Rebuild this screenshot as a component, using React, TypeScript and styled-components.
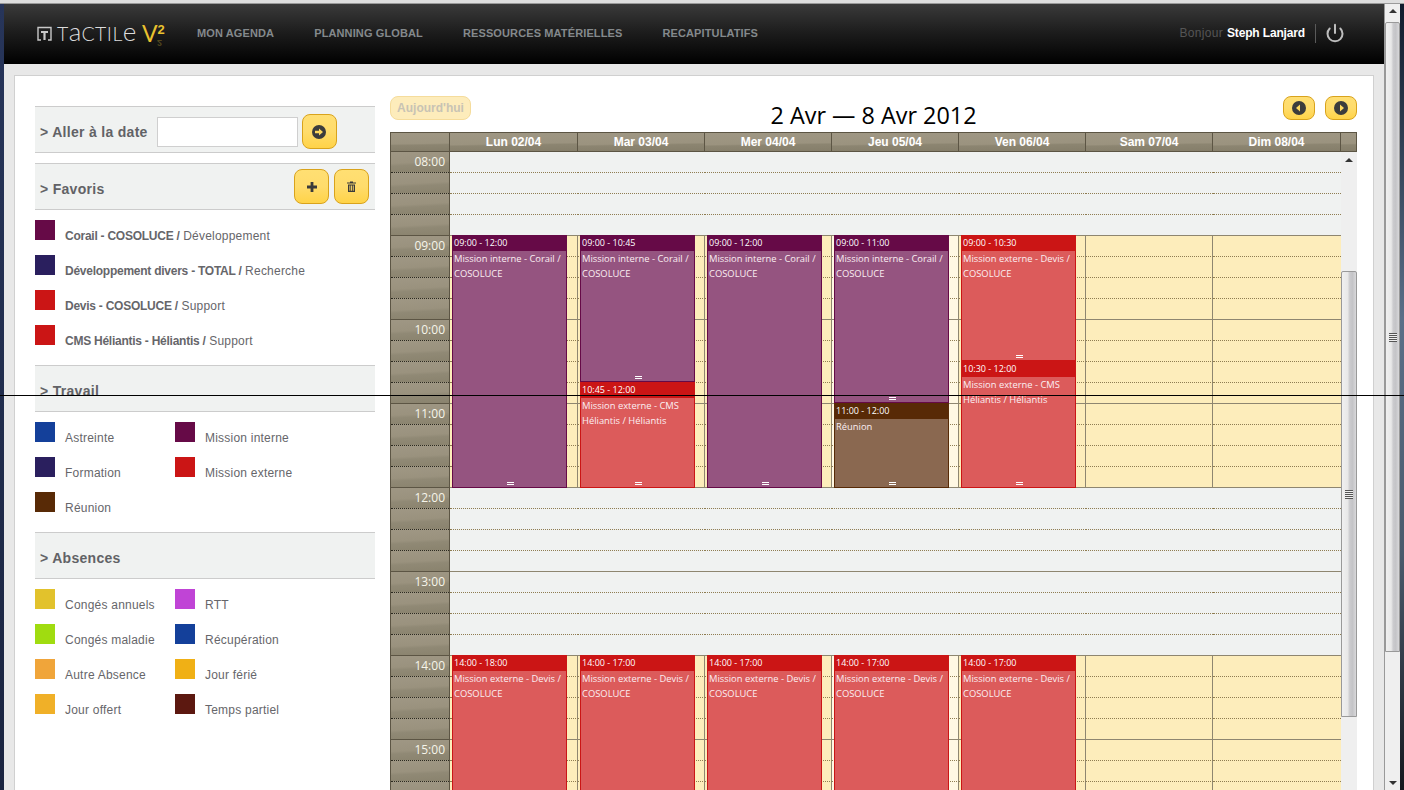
import React from "react";
import styled, { createGlobalStyle, css } from "styled-components";
import { Power } from "lucide-react";

const Global = createGlobalStyle`
  html, body { margin: 0; padding: 0; height: 790px; overflow: hidden; background: #222; }
  #root { height: 790px; }
  * { box-sizing: border-box; }
`;

const ui = `"Liberation Sans", Arial, sans-serif`;
const humanist = `"Open Sans", "Noto Sans", sans-serif`;

const Frame = styled.div`
  position: relative;
  display: flex;
  flex-direction: column;
  width: 1404px;
  height: 790px;
  overflow: hidden;
  font-family: ${ui};
`;
const TopEdge = styled.div`
  flex: 0 0 4px;
  background: #dedede;
  border-bottom: 1px solid #9a9a9a;
`;
const Row = styled.div`
  flex: 1;
  display: flex;
  min-height: 0;
`;
const LeftEdge = styled.div`
  flex: 0 0 4px;
  background: linear-gradient(180deg, #27355a, #1a2440);
`;
const RightEdge = styled.div`
  flex: 1;
  background: linear-gradient(180deg, #101a2c 0, #5a6f88 40%, #4a5a6c 70%, #15181e 100%);
`;
const Main = styled.div`
  flex: 0 0 1380px;
  display: flex;
  flex-direction: column;
  min-height: 0;
  background: #e8e8e8;
`;
const Header = styled.header`
  flex: 0 0 60px;
  display: flex;
  align-items: center;
  padding: 0 40px 2px 33px;
  background: linear-gradient(180deg, #3a3a3a 0, #1e1e1e 45%, #000 100%);
`;
const Logo = styled.div`
  flex: 0 0 160px;
  display: flex;
  align-items: center;
  gap: 5px;
  height: 30px;
`;
const LogoMark = styled.svg`
  width: 15px;
  height: 15px;
  margin-top: 1px;
`;
const LogoWord = styled.span`
  font-family: Lato, sans-serif;
  font-weight: 300;
  font-size: 19.5px;
  line-height: 20px;
  color: #dcdcdc;
  letter-spacing: 0.5px;
  width: 80px;
  white-space: nowrap;
  & > i {
    font-style: normal;
    font-size: 26px;
    line-height: 16px;
    letter-spacing: 0;
  }
`;
const LogoVersion = styled.span`
  position: relative;
  font-family: Lato, sans-serif;
  font-size: 23px;
  font-weight: 400;
  line-height: 20px;
  color: #e9c22f;
  white-space: nowrap;
  & > sup {
    font-family: ${ui};
    font-size: 13px;
    font-weight: 700;
    line-height: 0;
    vertical-align: 8px;
  }
`;
const LogoShine = styled.span`
  position: absolute;
  left: 15px;
  top: 15px;
  font-family: ${ui};
  font-size: 9px;
  font-weight: 700;
  line-height: 9px;
  color: #7a6a26;
  opacity: 0.6;
  transform: scaleY(-1);
`;
const Nav = styled.nav`
  display: flex;
  gap: 40px;
`;
const NavItem = styled.a`
  font-size: 11px;
  font-weight: 700;
  letter-spacing: 0.12px;
  color: #84898c;
  text-transform: uppercase;
  white-space: nowrap;
`;
const UserBox = styled.div`
  margin-left: auto;
  display: flex;
  align-items: center;
  font-size: 12px;
`;
const Hello = styled.span`
  color: #555;
  letter-spacing: 0.3px;
  margin-right: 4px;
`;
const UserName = styled.span`
  color: #fff;
  font-weight: 700;
  letter-spacing: -0.15px;
`;
const Divider = styled.span`
  width: 1px;
  height: 19px;
  background: #5a5a5a;
  margin: 0 9px 0 10px;
`;
const LogoutIcon = styled(Power)`
  color: #bdbdbd;
  display: block;
  margin-right: -1px;
`;
const Content = styled.div`
  flex: 1;
  min-height: 0;
  padding: 11px 10px 0;
`;
const Panel = styled.main`
  display: flex;
  align-items: flex-start;
  gap: 15px;
  height: 100%;
  padding: 20px 16px 0 20px;
  background: #fff;
  border: 1px solid #d0d0d0;
  border-bottom: 0;
  overflow: hidden;
`;

const Sidebar = styled.aside`
  flex: 0 0 340px;
  margin-top: 10px;
`;
const SectionHead = styled.div<{ $gap?: boolean }>`
  display: flex;
  align-items: center;
  height: 47px;
  padding: 0 6px 0 5px;
  background: #f0f2f1;
  border-top: 1px solid #cccccc;
  border-bottom: 1px solid #cccccc;
  ${(p) => p.$gap && css`margin-bottom: 10px;`}
`;
const SectionTitle = styled.h2`
  margin: 5px 9px 0 0;
  font-size: 14px;
  font-weight: 700;
  letter-spacing: 0.3px;
  line-height: 16px;
  color: #626266;
  white-space: nowrap;
`;
const DateInput = styled.input`
  width: 141px;
  height: 30px;
  margin: 5px 4px 0 0;
  background: #fff;
  border: 1px solid #cfcfcf;
  border-radius: 0;
`;
const YellowButton = styled.button<{ $w?: number; $h?: number; $shift?: number; $faded?: boolean }>`
  display: flex;
  align-items: center;
  justify-content: center;
  flex: none;
  width: ${(p) => p.$w ?? 35}px;
  height: ${(p) => p.$h ?? 35}px;
  margin-top: ${(p) => p.$shift ?? 0}px;
  padding: 0;
  font-family: ${ui};
  border: 1px solid #d9a31c;
  border-radius: 8px;
  background: linear-gradient(180deg, #ffdf73 0, #ffdc6c 50%, #ffd348 100%);
  ${(p) =>
    p.$faded &&
    css`
      background: #fdecbb;
      border-color: #f5dc9c;
      color: #c8c3b4;
      font-size: 12px;
      font-weight: 700;
    `}
`;
const HeadButtons = styled.div`
  margin-left: auto;
  display: flex;
  gap: 5px;
`;
const LegendList = styled.ul<{ $cols?: number }>`
  list-style: none;
  margin: 0;
  padding: 10px 0 5px;
  display: grid;
  grid-template-columns: ${(p) => (p.$cols === 2 ? "140px 1fr" : "1fr")};
  grid-auto-rows: 35px;
`;
const LegendItem = styled.li`
  display: flex;
  gap: 10px;
  font-size: 12px;
  letter-spacing: 0.22px;
  color: #66666a;
  white-space: nowrap;
`;
const Swatch = styled.span<{ $c: string }>`
  flex: 0 0 20px;
  height: 20px;
  background: ${(p) => p.$c};
`;
const LegendText = styled.span`
  margin-top: 9px;
  line-height: 14px;
  & > b {
    font-weight: 700;
    letter-spacing: -0.25px;
  }
`;

const Calendar = styled.section`
  flex: 0 0 967px;
`;
const Toolbar = styled.div`
  display: grid;
  grid-template-columns: 1fr auto 1fr;
  align-items: flex-start;
  height: 36px;
`;
const ToolLeft = styled.div`
  display: flex;
`;
const ToolRight = styled.div`
  display: flex;
  justify-content: flex-end;
  gap: 10px;
`;
const Title = styled.h1`
  margin: 5px 0 0;
  font-family: ${humanist};
  font-size: 23.4px;
  font-weight: 400;
  line-height: 28px;
  color: #000;
  white-space: nowrap;
`;
const columns = "60px 128px 127px 127px 127px 127px 127px 128px 16px";
const HeadRow = styled.div`
  display: grid;
  grid-template-columns: ${columns};
  height: 20px;
  border-top: 1px solid #5c5544;
  border-bottom: 1px solid #5c5544;
`;
const HeadCell = styled.div`
  border-right: 1px solid #5c5544;
  text-align: center;
  font-size: 12px;
  font-weight: 700;
  line-height: 18px;
  color: #fff;
  background: linear-gradient(179deg, #9f9784 0, #9b937f 58%, #8c8571 66%, #857e6a 100%);
  &:first-child { border-left: 1px solid #5c5544; }
`;
const Body = styled.div`
  display: grid;
  grid-template-columns: ${columns};
  height: 672px;
  overflow: hidden;
`;
const Gutter = styled.div`
  border-left: 1px solid #5c5544;
  border-right: 1px solid #5c5544;
`;
const GutterSlot = styled.div<{ $hourEnd: boolean }>`
  height: 21px;
  padding-right: 4px;
  text-align: right;
  font-family: ${humanist};
  font-size: 12px;
  line-height: 20px;
  color: #f6f5ea;
  background: linear-gradient(177deg, #9f9784 0, #9a927e 50%, #908975 62%, #8a836e 100%);
  border-bottom: 1px ${(p) => (p.$hourEnd ? "solid #5c5544" : "dotted #2c2a20")};
`;
const DayCol = styled.div`
  position: relative;
`;
const Slot = styled.div<{ $bg: string; $hourEnd: boolean; $line: boolean }>`
  height: 21px;
  background: ${(p) => p.$bg};
  border-bottom: 1px ${(p) => (p.$hourEnd ? "solid #8e8670" : "dotted #8f7d52")};
  ${(p) => p.$line && css`border-right: 1px solid #8e8670;`}
`;
const EventBox = styled.div<{ $top: number; $h: number; $dark: string; $soft: string }>`
  position: absolute;
  left: 2px;
  top: ${(p) => p.$top}px;
  width: 115px;
  height: ${(p) => p.$h}px;
  background: ${(p) => p.$soft};
  border: 1px solid ${(p) => p.$dark};
  border-top: 0;
  font-family: ${humanist};
  color: #fff;
  overflow: hidden;
`;
const EventTime = styled.div<{ $dark: string }>`
  height: 16px;
  margin: 0 -1px;
  padding-left: 2px;
  font-size: 9px;
  line-height: 16px;
  background: ${(p) => p.$dark};
  white-space: nowrap;
`;
const EventText = styled.div`
  padding: 0 1px;
  font-size: 9.4px;
  line-height: 15px;
  color: #fbeef2;
`;
const Grip = styled.span`
  position: absolute;
  left: 50%;
  bottom: 2px;
  width: 7px;
  height: 3px;
  margin-left: -3px;
  border-top: 1px solid #fff;
  border-bottom: 1px solid #fff;
`;

const Scroll = styled.div<{ $w: number }>`
  flex: 0 0 ${(p) => p.$w}px;
  display: flex;
  flex-direction: column;
  background: #efefef;
  height: 100%;
  min-height: 0;
  overflow: hidden;
`;
const ScrollGap = styled.div<{ $h?: number; $end?: boolean }>`
  display: flex;
  justify-content: center;
  ${(p) => (p.$h ? css`flex: 0 0 ${p.$h}px;` : css`flex: 1;`)}
  align-items: ${(p) => (p.$end ? "flex-end" : "flex-start")};
`;
const Arrow = styled.span<{ $down?: boolean; $offset: number }>`
  width: 0;
  height: 0;
  border-left: 4px solid transparent;
  border-right: 4px solid transparent;
  ${(p) =>
    p.$down
      ? css`
          border-top: 4px solid #333;
          margin-bottom: ${p.$offset}px;
        `
      : css`
          border-bottom: 4px solid #333;
          margin-top: ${p.$offset}px;
        `}
`;
const Thumb = styled.div<{ $h: number }>`
  flex: 0 0 ${(p) => p.$h}px;
  display: flex;
  align-items: center;
  justify-content: center;
  border: 1px solid #999;
  border-radius: 2px 2px 0 0;
  background: linear-gradient(90deg, #f0f0f0 0, #e8e8e8 40%, #cbcbce 55%, #c4c4c7 75%, #d8d8da 100%);
`;
const GripLines = styled.span`
  width: 8px;
  height: 9px;
  background: repeating-linear-gradient(180deg, #555 0 1px, #eee 1px 2px);
`;
const OuterScroll = styled(Scroll)`
  border-left: 1px solid #999;
`;
const ScanLine = styled.div`
  position: absolute;
  left: 0;
  right: 0;
  top: 395px;
  height: 1px;
  background: #000;
`;

const C = {
  blue: "#14409a",
  purple: "#660a47",
  navy: "#2a1f5e",
  red: "#cb1515",
  brown: "#582a06",
};

const CircleArrow = ({ dir }: { dir: "left" | "right" }) => (
  <svg width="14" height="14" viewBox="0 0 14 14">
    <circle cx="7" cy="7" r="7" fill="#3c3c3c" />
    {dir === "right" ? <path d="M6 3.5 L10 7 L6 10.5 Z" fill="#ffd95e" /> : <path d="M8 3.5 L4 7 L8 10.5 Z" fill="#ffd95e" />}
  </svg>
);
const ArrowGo = () => (
  <svg width="14" height="14" viewBox="0 0 14 14">
    <circle cx="7" cy="7" r="7" fill="#3c3c3c" />
    <path d="M3 5.8 H7 V3.4 L11 7 L7 10.6 V8.2 H3 Z" fill="#ffd95e" />
  </svg>
);
const PlusIcon = () => (
  <svg width="10" height="10" viewBox="0 0 10 10">
    <path d="M3.6 0 H6.4 V3.6 H10 V6.4 H6.4 V10 H3.6 V6.4 H0 V3.6 H3.6 Z" fill="#3a3a3a" />
  </svg>
);
const TrashIcon = () => (
  <svg width="9" height="11" viewBox="0 0 9 11">
    <path d="M3 0.5 H6 V1.5 H9 V2.6 H0 V1.5 H3 Z" fill="#3a3a3a" />
    <path d="M1 3.4 H8 V11 H1 Z M2.4 4.4 V9.8 H3.3 V4.4 Z M4.1 4.4 V9.8 H5 V4.4 Z M5.8 4.4 V9.8 H6.7 V4.4 Z" fill="#3a3a3a" fillRule="evenodd" />
  </svg>
);

const favorites = [
  { c: C.purple, b: "Corail - COSOLUCE /", t: " Développement" },
  { c: C.navy, b: "Développement divers - TOTAL /", t: " Recherche" },
  { c: C.red, b: "Devis - COSOLUCE /", t: " Support" },
  { c: C.red, b: "CMS Héliantis - Héliantis /", t: " Support" },
];
const work = [
  { c: C.blue, t: "Astreinte" },
  { c: C.purple, t: "Mission interne" },
  { c: C.navy, t: "Formation" },
  { c: C.red, t: "Mission externe" },
  { c: C.brown, t: "Réunion" },
];
const absences = [
  { c: "#e2c22c", t: "Congés annuels" },
  { c: "#c044d6", t: "RTT" },
  { c: "#a0dc10", t: "Congés maladie" },
  { c: C.blue, t: "Récupération" },
  { c: "#f0a53a", t: "Autre Absence" },
  { c: "#f0b015", t: "Jour férié" },
  { c: "#f0b028", t: "Jour offert" },
  { c: "#5c1810", t: "Temps partiel" },
];

const days = ["Lun 02/04", "Mar 03/04", "Mer 04/04", "Jeu 05/04", "Ven 06/04", "Sam 07/04", "Dim 08/04"];
const hours = [8, 9, 10, 11, 12, 13, 14, 15];
const isWork = (h: number) => (h >= 9 && h < 12) || (h >= 14 && h < 18);

const kinds = {
  interne: { dark: C.purple, soft: "#955480" },
  externe: { dark: C.red, soft: "#dc5b5b" },
  reunion: { dark: C.brown, soft: "#8a6850" },
};
type Ev = { top: number; h: number; time: string; text: string; kind: keyof typeof kinds };
const interne = "Mission interne - Corail / COSOLUCE";
const devis = "Mission externe - Devis / COSOLUCE";
const cms = "Mission externe - CMS Héliantis / Héliantis";
const afternoon = (time: string): Ev => ({ top: 503, h: 300, time, text: devis, kind: "externe" });
const events: Ev[][] = [
  [{ top: 83, h: 253, time: "09:00 - 12:00", text: interne, kind: "interne" }, afternoon("14:00 - 18:00")],
  [
    { top: 83, h: 147, time: "09:00 - 10:45", text: interne, kind: "interne" },
    { top: 230, h: 106, time: "10:45 - 12:00", text: cms, kind: "externe" },
    afternoon("14:00 - 17:00"),
  ],
  [{ top: 83, h: 253, time: "09:00 - 12:00", text: interne, kind: "interne" }, afternoon("14:00 - 17:00")],
  [
    { top: 83, h: 168, time: "09:00 - 11:00", text: interne, kind: "interne" },
    { top: 251, h: 85, time: "11:00 - 12:00", text: "Réunion", kind: "reunion" },
    afternoon("14:00 - 17:00"),
  ],
  [
    { top: 83, h: 126, time: "09:00 - 10:30", text: devis, kind: "externe" },
    { top: 209, h: 127, time: "10:30 - 12:00", text: cms, kind: "externe" },
    afternoon("14:00 - 17:00"),
  ],
  [],
  [],
];
const pad = (n: number) => String(n).padStart(2, "0");

export default function App() {
  return (
    <Frame>
      <Global />
      <TopEdge />
      <Row>
        <LeftEdge />
        <Main>
          <Header>
            <Logo>
              <LogoMark viewBox="0 0 15 15">
                <path d="M4 14 H1 V1.5 H14 V14 H11" fill="none" stroke="#c8c8c8" strokeWidth="1.4" />
                <path d="M4 5 H11 V7 H8.6 V14 H6.4 V7 H4 Z" fill="#c8c8c8" />
              </LogoMark>
              <LogoWord>
                T<i>a</i>CTIL<i>e</i>
              </LogoWord>
              <LogoVersion>
                V<sup>2</sup>
                <LogoShine>2</LogoShine>
              </LogoVersion>
            </Logo>
            <Nav>
              <NavItem>Mon agenda</NavItem>
              <NavItem>Planning global</NavItem>
              <NavItem>Ressources matérielles</NavItem>
              <NavItem>Recapitulatifs</NavItem>
            </Nav>
            <UserBox>
              <Hello>Bonjour</Hello>
              <UserName>Steph Lanjard</UserName>
              <Divider />
              <LogoutIcon size={20} strokeWidth={2.4} />
            </UserBox>
          </Header>
          <Content>
            <Panel>
              <Sidebar>
                <SectionHead $gap>
                  <SectionTitle>&gt; Aller à la date</SectionTitle>
                  <DateInput />
                  <YellowButton $shift={4}>
                    <ArrowGo />
                  </YellowButton>
                </SectionHead>
                <SectionHead>
                  <SectionTitle>&gt; Favoris</SectionTitle>
                  <HeadButtons>
                    <YellowButton>
                      <PlusIcon />
                    </YellowButton>
                    <YellowButton>
                      <TrashIcon />
                    </YellowButton>
                  </HeadButtons>
                </SectionHead>
                <LegendList>
                  {favorites.map((f) => (
                    <LegendItem key={f.b}>
                      <Swatch $c={f.c} />
                      <LegendText>
                        <b>{f.b}</b>
                        {f.t}
                      </LegendText>
                    </LegendItem>
                  ))}
                </LegendList>
                <SectionHead>
                  <SectionTitle>&gt; Travail</SectionTitle>
                </SectionHead>
                <LegendList $cols={2}>
                  {work.map((f) => (
                    <LegendItem key={f.t}>
                      <Swatch $c={f.c} />
                      <LegendText>{f.t}</LegendText>
                    </LegendItem>
                  ))}
                </LegendList>
                <SectionHead>
                  <SectionTitle>&gt; Absences</SectionTitle>
                </SectionHead>
                <LegendList $cols={2}>
                  {absences.map((f) => (
                    <LegendItem key={f.t}>
                      <Swatch $c={f.c} />
                      <LegendText>{f.t}</LegendText>
                    </LegendItem>
                  ))}
                </LegendList>
              </Sidebar>
              <Calendar>
                <Toolbar>
                  <ToolLeft>
                    <YellowButton $w={81} $h={24} $faded>
                      Aujourd'hui
                    </YellowButton>
                  </ToolLeft>
                  <Title>2 Avr — 8 Avr 2012</Title>
                  <ToolRight>
                    <YellowButton $w={32} $h={24}>
                      <CircleArrow dir="left" />
                    </YellowButton>
                    <YellowButton $w={32} $h={24}>
                      <CircleArrow dir="right" />
                    </YellowButton>
                  </ToolRight>
                </Toolbar>
                <HeadRow>
                  <HeadCell />
                  {days.map((d) => (
                    <HeadCell key={d}>{d}</HeadCell>
                  ))}
                  <HeadCell />
                </HeadRow>
                <Body>
                  <Gutter>
                    {hours.map((h) =>
                      [0, 1, 2, 3].map((q) => (
                        <GutterSlot key={`${h}-${q}`} $hourEnd={q === 3}>
                          {q === 0 ? `${pad(h)}:00` : ""}
                        </GutterSlot>
                      ))
                    )}
                  </Gutter>
                  {days.map((d, i) => (
                    <DayCol key={d}>
                      {hours.map((h) =>
                        [0, 1, 2, 3].map((q) => (
                          <Slot
                            key={`${h}-${q}`}
                            $hourEnd={q === 3}
                            $line={isWork(h) && i < days.length - 1}
                            $bg={isWork(h) ? (i === 3 ? "#fff8e3" : "#fdedbb") : "#f0f2f1"}
                          />
                        ))
                      )}
                      {events[i].map((e) => (
                        <EventBox key={e.time} $top={e.top} $h={e.h} $dark={kinds[e.kind].dark} $soft={kinds[e.kind].soft}>
                          <EventTime $dark={kinds[e.kind].dark}>{e.time}</EventTime>
                          <EventText>{e.text}</EventText>
                          <Grip />
                        </EventBox>
                      ))}
                    </DayCol>
                  ))}
                  <Scroll $w={16}>
                    <ScrollGap $h={119}>
                      <Arrow $offset={6} />
                    </ScrollGap>
                    <Thumb $h={446}>
                      <GripLines />
                    </Thumb>
                    <ScrollGap />
                  </Scroll>
                </Body>
              </Calendar>
            </Panel>
          </Content>
        </Main>
        <OuterScroll $w={16}>
          <ScrollGap $h={18}>
            <Arrow $offset={5} />
          </ScrollGap>
          <Thumb $h={630}>
            <GripLines />
          </Thumb>
          <ScrollGap $end>
            <Arrow $down $offset={5} />
          </ScrollGap>
        </OuterScroll>
        <RightEdge />
      </Row>
      <ScanLine />
    </Frame>
  );
}
